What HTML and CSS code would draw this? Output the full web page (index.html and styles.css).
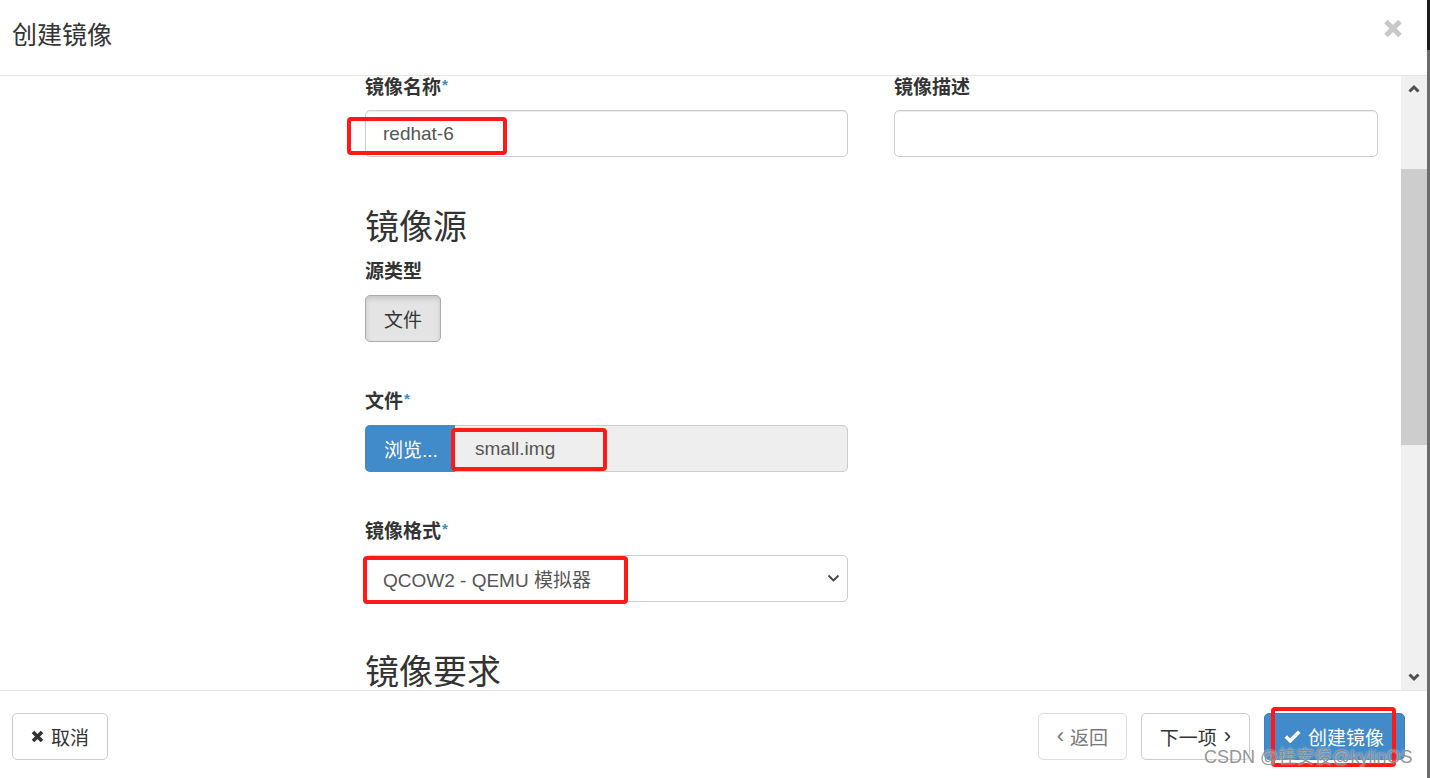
FILE: index.html
```html
<!DOCTYPE html>
<html lang="zh-CN">
<head>
    <meta charset="UTF-8">
    <meta name="viewport" content="width=device-width, initial-scale=1.0">
    <title>创建镜像</title>
    <link rel="stylesheet" href="styles.css">
</head>
<body>
    <div class="page">
        <div class="modal">
            <div class="modal-header">
                <h2 class="modal-title">创建镜像</h2>
                <button class="close" aria-label="关闭">
                    <svg width="20" height="19" viewBox="0 0 20 19"><path d="M3 2.5 L17 16.5 M17 2.5 L3 16.5" stroke="#c8c8c8" stroke-width="5"/></svg>
                </button>
            </div>

            <div class="modal-body">
                <div class="body-content">
                    <div class="row">
                        <div class="form-group first">
                            <label>镜像名称<span class="req">*</span></label>
                            <div class="field">
                                <input class="form-control" type="text" value="redhat-6">
                                <span class="mark mark-name"></span>
                            </div>
                        </div>
                        <div class="form-group first">
                            <label>镜像描述</label>
                            <div class="field">
                                <input class="form-control" type="text" value="">
                            </div>
                        </div>
                    </div>

                    <h3 class="section-title">镜像源</h3>

                    <div class="form-group">
                        <label>源类型</label>
                        <div class="btn-group">
                            <button class="btn btn-active">文件</button>
                        </div>
                    </div>

                    <div class="form-group narrow">
                        <label>文件<span class="req">*</span></label>
                        <div class="field file-input">
                            <span class="btn-browse">浏览...</span>
                            <span class="file-name">small.img</span>
                            <span class="mark mark-file"></span>
                        </div>
                    </div>

                    <div class="form-group narrow">
                        <label>镜像格式<span class="req">*</span></label>
                        <div class="field select">
                            <span class="select-value">QCOW2 - QEMU 模拟器</span>
                            <svg class="caret" width="13" height="9" viewBox="0 0 13 9"><path d="M1.5 1.5 L6.5 6.5 L11.5 1.5" fill="none" stroke="#444" stroke-width="1.8"/></svg>
                            <span class="mark mark-format"></span>
                        </div>
                    </div>

                    <h3 class="section-title">镜像要求</h3>
                </div>

                <div class="scrollbar">
                    <svg class="arrow" width="12" height="9" viewBox="0 0 12 9"><path d="M1.5 7.5 L6 3 L10.5 7.5" fill="none" stroke="#505050" stroke-width="3"/></svg>
                    <div class="track">
                        <div class="thumb"></div>
                    </div>
                    <svg class="arrow" width="12" height="9" viewBox="0 0 12 9"><path d="M1.5 1.5 L6 6 L10.5 1.5" fill="none" stroke="#505050" stroke-width="3"/></svg>
                </div>
            </div>

            <div class="modal-footer">
                <button class="btn btn-default">
                    <svg width="13" height="13" viewBox="0 0 13 13"><path d="M2 2 L11 11 M11 2 L2 11" stroke="#333" stroke-width="3.6"/></svg>
                    取消
                </button>
                <div class="footer-right">
                    <button class="btn btn-default disabled"><span class="angle">‹</span>返回</button>
                    <button class="btn btn-default">下一项<span class="angle">›</span></button>
                    <div class="submit-wrap">
                        <button class="btn btn-primary">
                            <svg width="17" height="13" viewBox="0 0 17 13"><path d="M1.8 6.5 L6.2 10.8 L15.2 1.8" fill="none" stroke="#fff" stroke-width="3.6"/></svg>
                            创建镜像
                        </button>
                        <span class="mark mark-submit"></span>
                    </div>
                </div>
            </div>
        </div>
        <div class="edge"></div>
    </div>
    <div class="watermark">CSDN @桂安俊@kylinOS</div>
</body>
</html>
```

FILE: styles.css
```css
* {
    box-sizing: border-box;
}
body {
    margin: 0;
    font-family: "Liberation Sans", "Noto Sans CJK SC", sans-serif;
    font-size: 19px;
    color: #333;
    background-color: #fff;
    overflow: hidden;
}
.page {
    display: flex;
    height: 778px;
}
.modal {
    width: 1427px;
    display: flex;
    flex-direction: column;
    background-color: #fff;
}
.edge {
    width: 3px;
    background: linear-gradient(#1e1e1e 0, #1e1e1e 50px, #6b6b6b 50px);
}

/* header */
.modal-header {
    height: 76px;
    flex: none;
    display: flex;
    justify-content: space-between;
    align-items: flex-start;
    padding: 0 24px 0 12px;
    border-bottom: 1px solid #e5e5e5;
}
.modal-title {
    margin: 0;
    padding-top: 17px;
    font-size: 25px;
    font-weight: normal;
    line-height: 36px;
    color: #333;
}
.close {
    margin-top: 19px;
    padding: 0;
    border: none;
    background: none;
    line-height: 0;
}

/* body */
.modal-body {
    height: 614px;
    flex: none;
    display: flex;
    overflow: hidden;
}
.body-content {
    flex: 1;
    padding-left: 365px;
    margin-top: -1px;
}
.row {
    display: grid;
    grid-template-columns: 483px 484px;
    column-gap: 46px;
}
.form-group {
    margin-bottom: 47px;
}
.form-group.first {
    margin-bottom: 0;
}
.narrow {
    width: 483px;
}
label {
    display: block;
    font-weight: bold;
    line-height: 26px;
    margin-bottom: 10px;
    white-space: nowrap;
}
.form-group.first label {
    margin-bottom: 9px;
}
.req {
    color: #428bca;
    font-size: 15px;
    line-height: 15px;
    vertical-align: top;
    position: relative;
    top: 2px;
    margin-left: 1px;
}
.field {
    position: relative;
    height: 47px;
}
.form-control {
    width: 100%;
    height: 47px;
    padding: 0 17px;
    font: inherit;
    color: #555;
    border: 1px solid #ccc;
    border-radius: 5px;
    box-shadow: inset 0 1px 1px rgba(0,0,0,0.075);
    outline: none;
}
.section-title {
    margin: 50px 0 12px;
    font-size: 34px;
    font-weight: normal;
    line-height: 40px;
    color: #333;
}

/* buttons */
.btn {
    height: 47px;
    padding: 0 18px;
    font: inherit;
    color: #333;
    background-color: #fff;
    border: 1px solid #ccc;
    border-radius: 5px;
    display: inline-flex;
    align-items: center;
    gap: 7px;
    cursor: pointer;
    white-space: nowrap;
}
.btn-active {
    height: 47px;
    width: 76px;
    justify-content: center;
    background-color: #e4e4e4;
    border-color: #adadad;
    box-shadow: inset 0 3px 5px rgba(0,0,0,0.125);
}
.btn-primary {
    color: #fff;
    background-color: #428bca;
    border-color: #3b7fbb;
}
.btn.disabled {
    color: #7a7a7a;
    border-color: #dedede;
    gap: 6px;
}
.angle {
    font-size: 22px;
    line-height: 1;
    position: relative;
    top: -1px;
}

/* file input */
.file-input {
    display: flex;
    border: 1px solid #ccc;
    border-radius: 5px;
    background-color: #eee;
}
.btn-browse {
    width: 90px;
    margin: -1px 0 -1px -1px;
    display: flex;
    align-items: center;
    padding-left: 19px;
    color: #fff;
    background-color: #428bca;
    border-radius: 5px 0 0 5px;
}
.file-name {
    display: flex;
    align-items: center;
    padding-left: 20px;
    color: #555;
}

/* select */
.select {
    display: flex;
    align-items: center;
    justify-content: space-between;
    padding: 0 7px 0 17px;
    border: 1px solid #ccc;
    border-radius: 5px;
    background-color: #fff;
}
.select-value {
    color: #555;
}

/* scrollbar */
.scrollbar {
    width: 26px;
    flex: none;
    display: flex;
    flex-direction: column;
    align-items: center;
    background-color: #f0f0f0;
}
.scrollbar .arrow {
    flex: none;
    margin: 8px 0;
}
.track {
    flex: 1;
    width: 100%;
    padding-top: 68px;
    padding-bottom: 220px;
}
.thumb {
    height: 100%;
    background-color: #cdcdcd;
}

/* footer */
.modal-footer {
    flex: 1;
    display: flex;
    justify-content: space-between;
    align-items: flex-start;
    padding: 22px 22px 0 12px;
    border-top: 1px solid #e5e5e5;
}
.modal-footer .btn-default:first-child {
    width: 96px;
    padding-left: 18px;
}
.footer-right {
    display: flex;
    gap: 14px;
}
.footer-right .btn.disabled {
    width: 89px;
}
.footer-right .btn-primary {
    width: 141px;
    padding-left: 19px;
}
.submit-wrap {
    position: relative;
}

/* red annotation boxes drawn over the screenshot */
.mark {
    position: absolute;
    border: 4px solid #ff1a1a;
    border-radius: 4px;
    pointer-events: none;
}
.mark-name {
    left: -18px;
    top: 7px;
    width: 160px;
    height: 38px;
}
.mark-file {
    left: 85px;
    top: 2px;
    width: 156px;
    height: 43px;
}
.mark-format {
    left: -3px;
    top: 0;
    width: 265px;
    height: 48px;
}
.mark-submit {
    left: 7px;
    top: -6px;
    width: 125px;
    height: 60px;
}

.watermark {
    position: absolute;
    left: 1204px;
    top: 746px;
    font-size: 18px;
    line-height: 22px;
    color: rgba(120,120,120,0.8);
    text-shadow: 0 0 2px rgba(255,255,255,0.9);
    white-space: nowrap;
}
```
